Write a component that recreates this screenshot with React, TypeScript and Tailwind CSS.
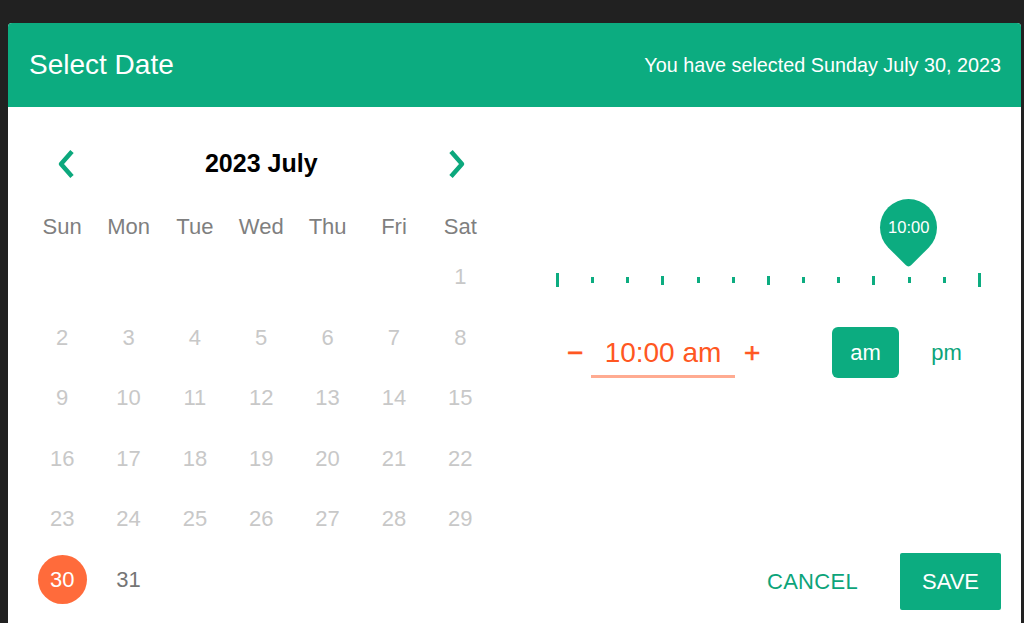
import React from 'react';

const WEEKDAYS = ['Sun', 'Mon', 'Tue', 'Wed', 'Thu', 'Fri', 'Sat'];
const TICKS = [2, 0, 0, 1, 0, 0, 1, 0, 0, 1, 0, 0, 2];

function Chevron({ dir }: { dir: 'left' | 'right' }) {
  return (
    <svg width="20" height="30" viewBox="0 0 20 30" fill="none" className="shrink-0">
      <path
        d={dir === 'left' ? 'M16 2.5 L5 15 L16 27.5' : 'M4 2.5 L15 15 L4 27.5'}
        stroke="#0ca87d"
        strokeWidth="4.5"
        strokeLinejoin="round"
      />
    </svg>
  );
}

function Calendar() {
  const days: (number | null)[] = [null, null, null, null, null, null];
  for (let d = 1; d <= 31; d++) days.push(d);

  return (
    <div className="w-[507px] shrink-0 pl-[21px] pr-[21.5px] pt-[29px]">
      <div className="flex h-[56px] items-center justify-between pl-[27px] pr-[27px]">
        <Chevron dir="left" />
        <span className="text-[25px] font-bold text-black">2023 July</span>
        <Chevron dir="right" />
      </div>
      <div className="mt-[14px] grid h-[40.4px] grid-cols-7 items-center text-center text-[22px] text-[#7f7f7f]">
        {WEEKDAYS.map((w) => (
          <div key={w}>{w}</div>
        ))}
      </div>
      <div className="grid grid-cols-7 auto-rows-[60.5px] text-[22px]">
        {days.map((d, i) => (
          <div key={i} className="flex items-center justify-center">
            {d === 30 ? (
              <span className="flex h-[49px] w-[49px] items-center justify-center rounded-full bg-[#ff6b3b] text-white">
                30
              </span>
            ) : (
              <span className={d === 31 ? 'text-[#757575]' : 'text-[#c8c8c8]'}>{d}</span>
            )}
          </div>
        ))}
      </div>
    </div>
  );
}

function TimeSlider() {
  return (
    <div className="relative ml-[41px] mt-[166px] flex h-[14px] w-[425px] items-center justify-between">
      {TICKS.map((t, i) => (
        <div
          key={i}
          className={`w-[3px] bg-[#0cac80] ${t === 2 ? 'h-[14px]' : t === 1 ? 'h-[9px]' : 'h-[6px]'}`}
        />
      ))}
      {/* value pin sits over the ticks */}
      <div className="absolute left-[324px] top-[-74px] flex h-[57px] w-[57px] rotate-45 items-center justify-center rounded-[50%_50%_4px_50%] bg-[#0cac80]">
        <span className="-rotate-45 text-[16.5px] text-white">10:00</span>
      </div>
    </div>
  );
}

function TimeInput() {
  return (
    <div className="mt-[40px] flex h-[51px] items-center pl-[52px]">
      <span className="w-[14px] text-center text-[28px] text-[#ff5722] [-webkit-text-stroke:0.6px_#ff5722]">−</span>
      <div className="ml-[10px] flex h-[51px] w-[144px] items-center justify-center border-b-[3px] border-[#ffab91] pt-[3px] text-[28px] text-[#ff5722]">
        10:00 am
      </div>
      <span className="ml-[9px] w-[16px] text-center text-[28px] text-[#ff5722] [-webkit-text-stroke:0.6px_#ff5722]">+</span>
      <button className="ml-[72px] flex h-[51px] w-[67px] items-center justify-center rounded-[6px] bg-[#0cac80] text-[22px] text-white">
        am
      </button>
      <button className="flex h-[51px] w-[95px] items-center justify-center text-[22px] text-[#0ca47a]">pm</button>
    </div>
  );
}

export default function App() {
  return (
    <div className="h-[623px] w-[1024px] overflow-hidden bg-[#212121] pl-2 pr-[3px] pt-[23px] font-['Liberation_Sans',Arial,sans-serif]">
      <div className="h-[700px] rounded-t bg-white">
        <div className="flex h-[84px] items-center justify-between rounded-t bg-[#0cac80] pl-[21px] pr-5 text-white">
          <span className="text-[28px]">Select Date</span>
          <span className="pt-px text-[19.8px]">You have selected Sunday July 30, 2023</span>
        </div>
        <div className="flex">
          <Calendar />
          <div className="flex-1">
            <TimeSlider />
            <TimeInput />
            <div className="mt-[175px] flex items-center justify-end pr-5">
              <button className="mr-[42px] text-[22px] tracking-[0.3px] text-[#0ca47a]">CANCEL</button>
              <button className="h-[57px] w-[101px] rounded-[2px] bg-[#0cac80] text-[22px] text-white">SAVE</button>
            </div>
          </div>
        </div>
      </div>
    </div>
  );
}
